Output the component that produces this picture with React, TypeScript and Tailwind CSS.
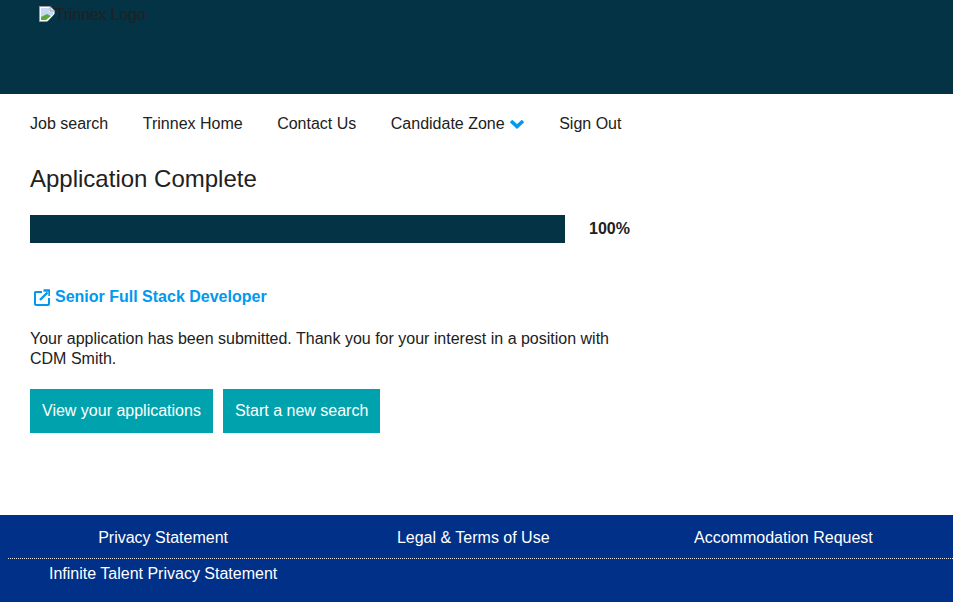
const font = "font-['Liberation_Sans',Arial,sans-serif]";

function BrokenImage() {
  return (
    <svg width="16" height="16" viewBox="0 0 16 16" className="shrink-0">
      <path d="M0.5 0.5H11L15.5 5V15.5H0.5Z" fill="#fff" stroke="#9a9a9a" />
      <path d="M2 2H10V6H14V9L2 12Z" fill="#c3d9f5" />
      <path d="M2 14V11L8 8L12 10L7 14H2Z" fill="#5fa83c" />
      <path d="M15.5 8L8 16H16V8Z" fill="#033344" />
      <path d="M11 0.5V5H15.5" fill="#e8e8e8" stroke="#9a9a9a" />
    </svg>
  );
}

function Chevron() {
  return (
    <svg width="16" height="10" viewBox="0 0 16 10" className="ml-[4px]">
      <path d="M2 2L8 7.5L14 2" fill="none" stroke="#0099ee" strokeWidth="3.6" />
    </svg>
  );
}

function ExternalIcon() {
  return (
    <svg width="16" height="17" viewBox="0 0 16 17" fill="none" stroke="#0099ee" strokeWidth="2">
      <path d="M8 3H1.5Q1 3 1 3.5V15Q1 16 2 16H14Q15 16 15 15V9" />
      <path d="M6 11L13.5 3.5" strokeWidth="2.4" />
      <path d="M9.5 1.5H15.5V7" strokeWidth="2.4" />
    </svg>
  );
}

export default function App() {
  return (
    <div className={`${font} flex h-[602px] flex-col bg-white text-[16px] text-[#212121]`}>
      <header className="h-[94px] bg-[#033344] pl-[39px] pt-[6px]">
        <div className="flex items-start leading-[17px]">
          <BrokenImage />
          <span className="tracking-[-0.2px]">Trinnex Logo</span>
        </div>
      </header>

      <nav className="flex h-[58px] items-center gap-[34.5px] px-[30px] pt-[2px] leading-[18px]">
        <a>Job search</a>
        <a>Trinnex Home</a>
        <a>Contact Us</a>
        <a className="flex items-center">
          Candidate Zone
          <Chevron />
        </a>
        <a>Sign Out</a>
      </nav>

      <main className="flex-1 px-[30px]">
        <h1 className="mt-[13px] text-[24px] leading-[28px]">Application Complete</h1>

        <div className="mt-[22px] flex w-[600px] items-center">
          <div className="h-[28px] w-[535px] bg-[#033344]" />
          <span className="ml-[24px] font-bold">100%</span>
        </div>

        <a className="mt-[45px] flex items-center pl-[4px] font-bold leading-[18px] text-[#0099ee]">
          <ExternalIcon />
          <span className="ml-[5px]">Senior Full Stack Developer</span>
        </a>

        <p className="mt-[23px] w-[600px] leading-[20px]">
          Your application has been submitted. Thank you for your interest in a position with CDM Smith.
        </p>

        <div className="mt-[20px] flex gap-[10px]">
          <button className="h-[44px] bg-[#00a3ad] px-[12px] text-white">View your applications</button>
          <button className="h-[44px] bg-[#00a3ad] px-[12px] text-white">Start a new search</button>
        </div>
      </main>

      <footer className="h-[87px] bg-[#003087] pl-[8px] text-white">
        <div className="h-[44px] border-b border-dotted border-[#e8e8e8] pt-[2px]">
          <div className="grid h-full w-[930.5px] grid-cols-3 items-center text-center">
            <a>Privacy Statement</a>
            <a>Legal &amp; Terms of Use</a>
            <a>Accommodation Request</a>
          </div>
        </div>
        <div className="pl-[41px] pt-[6px] leading-[18px]">
          <a>Infinite Talent Privacy Statement</a>
        </div>
      </footer>
    </div>
  );
}
